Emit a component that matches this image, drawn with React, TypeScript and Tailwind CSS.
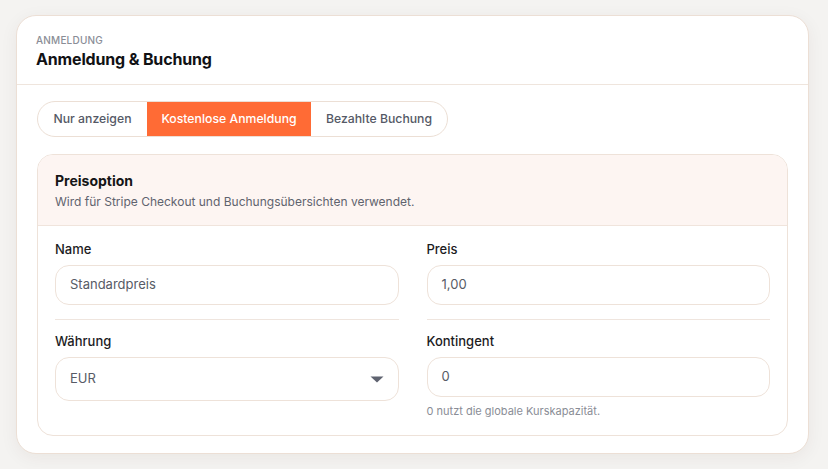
import React from "react";

const font = { fontFamily: "Inter, 'Noto Sans', sans-serif" };

function Label({ children }: { children: React.ReactNode }) {
  return <div className="text-[13px] leading-[20px] font-medium text-[#1c1c1e] mb-1.5">{children}</div>;
}

function Input({ value }: { value: string }) {
  return (
    <div className="h-[40px] rounded-[14px] border border-[#eee2d9] bg-white flex items-center px-[14px] text-[13px] text-[#575b66]">
      {value}
    </div>
  );
}

export default function App() {
  return (
    <div className="min-h-[469px] bg-[#f4f3f1] pt-[15px] pl-[16px] pr-[19px] pb-[15px]" style={font}>
      <div className="rounded-[20px] border border-[#ecdfd5] bg-white shadow-[0_4px_18px_rgba(60,40,20,0.06)] h-[439px] flex flex-col">
        <div className="pl-[19px] pr-5 pt-[17px] pb-[13px] border-b border-[#efe5dd]">
          <div className="text-[10px] leading-[14px] tracking-[0.02em] uppercase text-[#8a8d96] font-medium">Anmeldung</div>
          <div className="text-[16px] leading-[24px] font-bold tracking-[-0.01em] text-[#111114]">Anmeldung &amp; Buchung</div>
        </div>
        <div className="px-5 pt-4">
          <div className="inline-flex h-[36px] rounded-full border border-[#ecdfd5] overflow-hidden text-[12.25px] font-medium whitespace-nowrap">
            <div className="w-[109px] flex items-center justify-center text-[#555966]">Nur anzeigen</div>
            <div className="w-[164px] flex items-center justify-center bg-[#ff6b35] text-white">Kostenlose Anmeldung</div>
            <div className="w-[136px] flex items-center justify-center text-[#555966]">Bezahlte Buchung</div>
          </div>
          <div className="mt-[17px] rounded-2xl border border-[#eee2d9] overflow-hidden">
            <div className="bg-[#fdf5f2] px-[17px] pt-4 pb-[14px] border-b border-[#f0e4dc]">
              <div className="text-[14px] leading-[20px] font-bold text-[#151517]">Preisoption</div>
              <div className="mt-[2px] text-[12px] leading-[18px] text-[#5f636e]">Wird für Stripe Checkout und Buchungsübersichten verwendet.</div>
            </div>
            <div className="px-[17px] pt-[13px] pb-4 grid grid-cols-2 gap-x-7 gap-y-[11px]">
              <div className="pb-[14px] border-b border-[#efe5de]">
                <Label>Name</Label>
                <Input value="Standardpreis" />
              </div>
              <div className="pb-[14px] border-b border-[#efe5de]">
                <Label>Preis</Label>
                <Input value="1,00" />
              </div>
              <div>
                <Label>Währung</Label>
                <div className="h-[44px] rounded-[14px] border border-[#eee2d9] bg-white flex items-center justify-between pl-[14px] pr-[14px] text-[13px] text-[#575b66]">
                  <span>EUR</span>
                  <svg width="14" height="7" viewBox="0 0 14 7">
                    <path d="M0.5 0.5 L13.5 0.5 L7 6.5 Z" fill="#5f6370" />
                  </svg>
                </div>
              </div>
              <div>
                <Label>Kontingent</Label>
                <Input value="0" />
                <div className="mt-1.5 text-[11px] leading-[16px] text-[#8a8d96]">0 nutzt die globale Kurskapazität.</div>
              </div>
            </div>
          </div>
        </div>
      </div>
    </div>
  );
}
